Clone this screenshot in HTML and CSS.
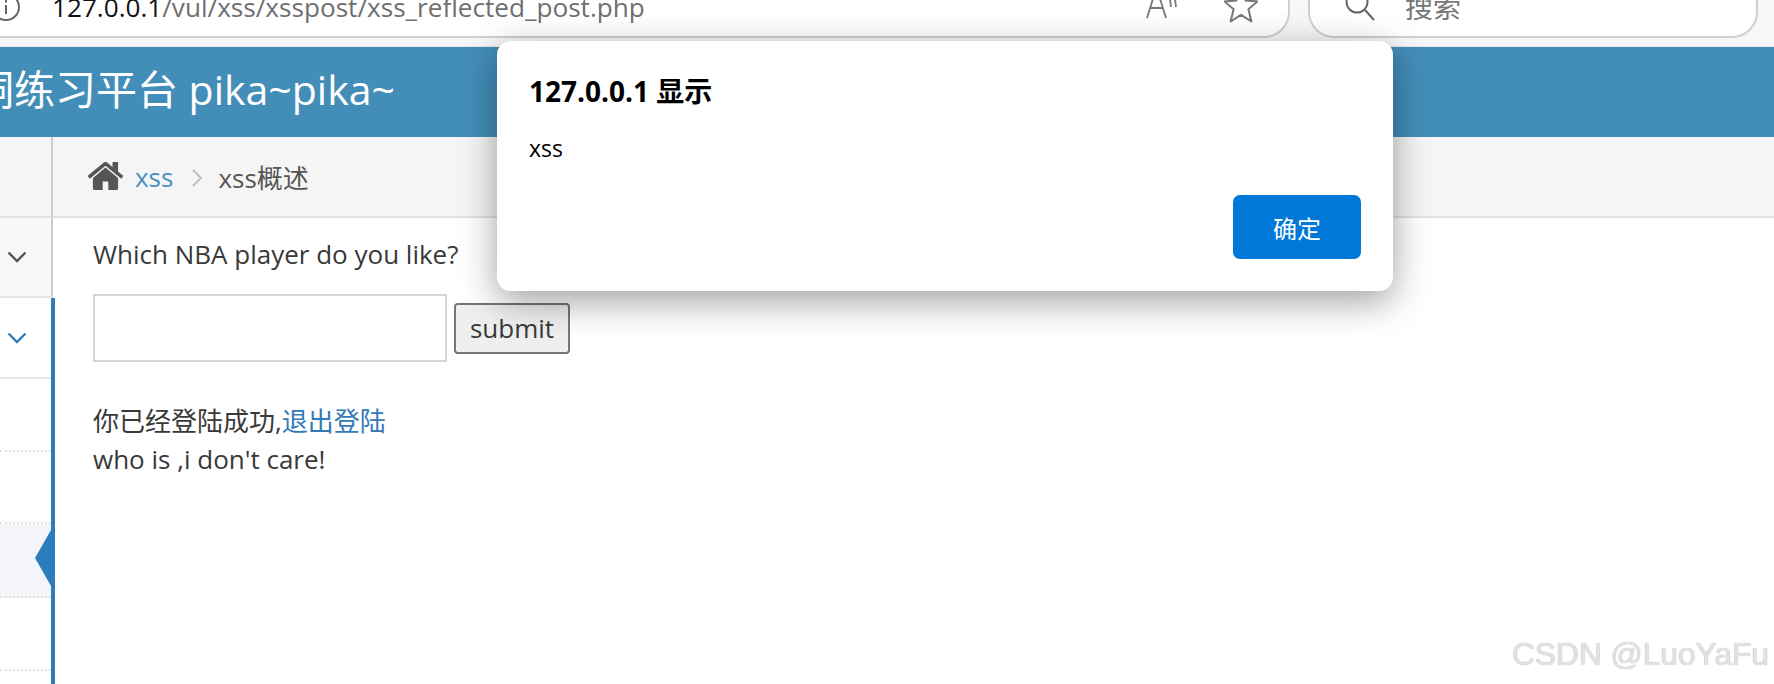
FILE: index.html
```html
<!DOCTYPE html>
<html lang="zh">
<head>
<meta charset="utf-8">
<title>xss</title>
<link rel="stylesheet" href="styles.css">
</head>
<body>
<div class="toolbar">
  <div class="url-pill">
    <svg class="info-icon" viewBox="0 0 28 28"><circle cx="14" cy="14" r="13" fill="none" stroke="#666" stroke-width="2"/><path d="M14 12v9M14 7v2.4" fill="none" stroke="#666" stroke-width="2"/></svg>
    <div class="url"><span class="url-host">127.0.0.1</span>/vul/xss/xsspost/xss_reflected_post.php</div>
    <svg class="read-icon" viewBox="0 0 32 36"><path d="M2 33 11 4h1l9 29M5.500 23h12M25 14l1 8M30 14l1 8" fill="none" stroke="#777" stroke-width="1.8"/></svg>
    <svg class="star-icon" viewBox="0 0 34 36"><path d="M17 2l4.600 11.400 12 1-9.200 7.800 3 12.300L17 27.800 6.600 34.500l3-12.300L.4 14.400l12-1z" fill="none" stroke="#777" stroke-width="2" stroke-linejoin="round"/></svg>
  </div>
  <div class="search-pill">
    <svg class="search-icon" viewBox="0 0 30 36"><circle cx="12" cy="12" r="10.500" fill="none" stroke="#666" stroke-width="2"/><path d="M20 20l9 10" fill="none" stroke="#666" stroke-width="2"/></svg>
    <span class="search-label">搜索</span>
  </div>
</div>

<header class="site-header">
  <div class="site-title">洞练习平台 pika~pika~</div>
</header>

<div class="layout">
  <aside class="sidebar">
    <div class="side-top"></div>
    <div class="side-row side-row-open">
      <svg class="chev" viewBox="0 0 20 12"><path d="M1.500 1.500 10 10l8.500-8.500" fill="none" stroke="#555" stroke-width="2.400"/></svg>
    </div>
    <div class="side-group">
      <div class="side-row side-row-current">
        <svg class="chev" viewBox="0 0 20 12"><path d="M1.500 1.500 10 10l8.500-8.500" fill="none" stroke="#2b7dbc" stroke-width="2.400"/></svg>
      </div>
      <div class="side-item"></div>
      <div class="side-item side-item-short"></div>
      <div class="side-item side-item-active"></div>
      <div class="side-item"></div>
    </div>
  </aside>

  <main class="main">
    <nav class="breadcrumb">
      <svg class="home-icon" viewBox="0 256 1664 1280"><path fill="#555" d="M1408 992v480q0 26-19 45t-45 19h-384v-384h-256v384h-384q-26 0-45-19t-19-45v-480q0-1 .5-3t.5-3l575-474 575 474q1 2 1 6zm223-69l-62 74q-8 9-21 11h-3q-13 0-21-7l-692-577-692 577q-12 8-24 7-13-2-21-11l-62-74q-8-10-7-23.500t11-21.500l719-599q32-26 76-26t76 26l244 204v-195q0-14 9-23t23-9h192q14 0 23 9t9 23v408l219 182q10 8 11 21.500t-7 23.500z"/></svg>
      <a class="crumb-link" href="#">xss</a>
      <svg class="crumb-sep" viewBox="0 0 10 18"><path d="M1 1l8 8-8 8" fill="none" stroke="#b9bdc6" stroke-width="1.800"/></svg>
      <span class="crumb-current">xss概述</span>
    </nav>
    <section class="content">
      <p class="question">Which NBA player do you like?</p>
      <form class="nba-form">
        <input class="nba-input" type="text">
        <button class="nba-submit" type="button">submit</button>
      </form>
      <p class="result">你已经登陆成功,<a class="logout" href="#">退出登陆</a><br>who is ,i don't care!</p>
    </section>
  </main>
</div>

<div class="dialog">
  <div class="dialog-title">127.0.0.1 显示</div>
  <div class="dialog-message">xss</div>
  <div class="dialog-actions"><button class="dialog-ok" type="button">确定</button></div>
</div>

<div class="watermark">CSDN @LuoYaFu</div>
</body>
</html>
```
FILE: styles.css
```css
* { box-sizing: border-box; }
html, body { margin: 0; padding: 0; }
body {
  width: 1774px;
  height: 684px;
  overflow: hidden;
  position: relative;
  background: #fff;
  font-family: "Open Sans", "Noto Sans CJK SC", sans-serif;
  color: #393939;
}

/* browser toolbar */
.toolbar {
  height: 47px;
  background: #f7f7f7;
  border-bottom: 1px solid #e6e6e6;
  display: flex;
  align-items: flex-end;
  padding-bottom: 8px;
  overflow: hidden;
}
.url-pill {
  width: 1290px;
  height: 60px;
  flex: none;
  background: #fff;
  border: 2px solid #cfcfcf;
  border-width: 0 2px 2px 0;
  border-radius: 0 26px 26px 0;
  display: flex;
  align-items: center;
}
.info-icon { width: 28px; height: 28px; margin-left: -8px; flex: none; }
.url {
  margin-left: 32px;
  font-size: 26.15px;
  line-height: 36px;
  color: #6f6f6f;
  white-space: nowrap;
  width: 1093px;
  flex: none;
}
.url-host { color: #111; }
.read-icon { width: 32px; height: 36px; flex: none; margin-top: -8px; }
.star-icon { width: 34px; height: 36px; flex: none; margin-left: 47px; margin-top: -5px; }
.search-pill {
  width: 450px;
  height: 60px;
  flex: none;
  margin-left: 18px;
  background: #fff;
  border: 2px solid #cfcfcf;
  border-top: 0;
  border-radius: 26px;
  display: flex;
  align-items: center;
  padding-left: 35px;
}
.search-icon { width: 30px; height: 36px; flex: none; margin-top: 1px; }
.search-label { margin-left: 30px; font-size: 28px; color: #777; line-height: 36px; }

/* site header */
.site-header {
  height: 90px;
  background: #438eb9;
  display: flex;
  align-items: center;
  padding-bottom: 6px;
}
.site-title {
  width: 395px;
  display: flex;
  justify-content: flex-end;
  overflow: hidden;
  white-space: nowrap;
  color: #fff;
  font-size: 41px;
  line-height: 54px;
}

/* page layout */
.layout { display: flex; height: 547px; }
.sidebar { width: 53px; flex: none; display: flex; flex-direction: column; }
.side-top {
  flex: none;
  height: 81px;
  background: #f5f5f5;
  border-right: 2px solid #ccc;
  border-bottom: 2px solid #e2e2e2;
}
.side-row {
  flex: none;
  height: 80px;
  display: flex;
  align-items: center;
  justify-content: flex-start;
  padding-left: 7px;
}
.side-row-open {
  background: #f8f8f8;
  border-right: 2px solid #ccc;
  border-bottom: 2px solid #e5e5e5;
}
.side-group {
  flex: 1;
  width: 55px;
  border-right: 4px solid #2b7dbc;
  position: relative;
  z-index: 1;
}
.side-row-current { background: #fff; border-bottom: 2px solid #e5e5e5; height: 81px; }
.chev { width: 20px; height: 12px; }
.side-item { height: 73px; border-bottom: 2px dotted #e2e2e2; }
.side-item-short { height: 72px; }
.side-item-active { background: #f3f5f9; position: relative; height: 74px; }
.side-item-active::after {
  content: "";
  position: absolute;
  right: 0;
  top: 6px;
  border-style: solid;
  border-width: 28px 16px 28px 0;
  border-color: transparent #2b7dbc transparent transparent;
}

/* main */
.main { flex: 1; min-width: 0; }
.breadcrumb {
  height: 81px;
  background: #f5f5f5;
  border-bottom: 2px solid #e2e2e2;
  display: flex;
  align-items: center;
  padding-left: 34px;
  font-size: 26px;
}
.home-icon { width: 37px; height: 28px; flex: none; margin-top: -2px; }
.crumb-link { margin-left: 11px; color: #4c8fbd; text-decoration: none; }
.crumb-sep { width: 10px; height: 18px; margin-left: 19px; flex: none; margin-top: 2px; }
.crumb-current { margin-left: 16px; color: #555; }

.content { padding: 17px 0 0 40px; font-size: 26px; line-height: 39px; }
.question { margin: 0; }
.nba-form { display: flex; align-items: center; margin-top: 20px; }
.nba-input {
  width: 354px;
  height: 68px;
  border: 2px solid #d5d5d5;
  background: #fff;
  padding: 0;
}
.nba-submit {
  width: 116px;
  height: 51px;
  margin-left: 7px;
  padding: 0;
  font: inherit;
  color: #393939;
  background: #efefef;
  border: 2px solid #767676;
  border-radius: 4px;
}
.result { margin: 40px 0 0; line-height: 38px; }
.logout { color: #337ab7; text-decoration: none; }

/* alert dialog */
.dialog {
  position: absolute;
  left: 497px;
  top: 41px;
  width: 896px;
  height: 250px;
  background: #fff;
  border-radius: 14px;
  box-shadow: 0 10px 36px rgba(0, 0, 0, .38);
  padding: 29px 32px 32px 32px;
  display: flex;
  flex-direction: column;
  color: #000;
}
.dialog-title { font-size: 28px; font-weight: 700; line-height: 42px; }
.dialog-message { font-size: 23px; line-height: 32px; margin-top: 20px; }
.dialog-actions { margin-top: auto; display: flex; justify-content: flex-end; }
.dialog-ok {
  width: 128px;
  height: 64px;
  border: 0;
  border-radius: 7px;
  background: #0078d7;
  color: #fff;
  font: 24px "Open Sans", "Noto Sans CJK SC", sans-serif;
  padding: 0;
}

.watermark {
  position: absolute;
  right: 5px;
  top: 636px;
  font-family: "Liberation Sans", sans-serif;
  font-size: 31.7px;
  line-height: 36px;
  color: #e2e2e2;
  text-shadow: 0 0 1px #aaa;
  white-space: nowrap;
}
```
